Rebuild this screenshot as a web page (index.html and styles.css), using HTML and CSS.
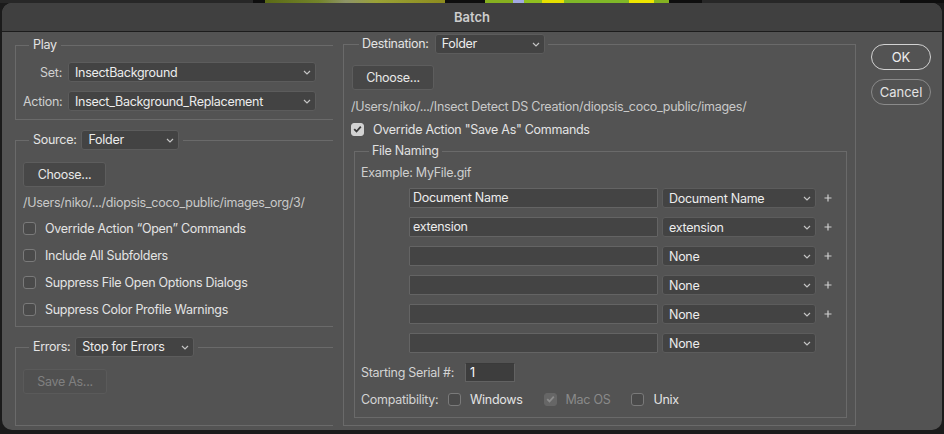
FILE: index.html
```html
<!DOCTYPE html>
<html>
<head>
<meta charset="utf-8">
<title>Batch</title>
<link rel="stylesheet" href="styles.css">
</head>
<body>
<div class="strip">
  <span class="seg s1"></span><span class="seg s2"></span><span class="seg s3"></span><span class="seg s4"></span><span class="seg s5"></span><span class="seg s6"></span><span class="seg s7"></span><span class="seg s8"></span>
</div>
<div class="dialog">
  <div class="titlebar">Batch</div>
  <div class="content">
    <div class="leftcol">
      <fieldset class="grp play">
        <legend>Play</legend>
        <div class="frow"><span class="flabel">Set:</span><div class="sel wsel"><span class="t">InsectBackground</span><svg class="chev" width="8" height="5" viewBox="0 0 8 5"><path d="M1 1l3 3 3-3" fill="none" stroke="#c4c4c4" stroke-width="1.2"/></svg></div></div>
        <div class="frow"><span class="flabel">Action:</span><div class="sel wsel"><span class="t">Insect_Background_Replacement</span><svg class="chev" width="8" height="5" viewBox="0 0 8 5"><path d="M1 1l3 3 3-3" fill="none" stroke="#c4c4c4" stroke-width="1.2"/></svg></div></div>
      </fieldset>

      <fieldset class="grp source">
        <legend><span class="lt">Source:</span><div class="sel srcsel"><span class="t">Folder</span><svg class="chev" width="8" height="5" viewBox="0 0 8 5"><path d="M1 1l3 3 3-3" fill="none" stroke="#c4c4c4" stroke-width="1.2"/></svg></div></legend>
        <button class="btn choose">Choose...</button>
        <div class="path path1">/Users/niko/.../diopsis_coco_public/images_org/3/</div>
        <div class="cbrow"><span class="cb"></span><span>Override Action “Open” Commands</span></div>
        <div class="cbrow"><span class="cb"></span><span>Include All Subfolders</span></div>
        <div class="cbrow"><span class="cb"></span><span>Suppress File Open Options Dialogs</span></div>
        <div class="cbrow"><span class="cb"></span><span>Suppress Color Profile Warnings</span></div>
      </fieldset>

      <fieldset class="grp errors">
        <legend><span class="lt">Errors:</span><div class="sel errsel"><span class="t">Stop for Errors</span><svg class="chev" width="8" height="5" viewBox="0 0 8 5"><path d="M1 1l3 3 3-3" fill="none" stroke="#c4c4c4" stroke-width="1.2"/></svg></div></legend>
        <button class="btn saveas" disabled>Save As...</button>
      </fieldset>
    </div>

    <div class="rightcol">
      <fieldset class="box dest">
        <legend><span class="lt">Destination:</span><div class="sel destsel"><span class="t">Folder</span><svg class="chev" width="8" height="5" viewBox="0 0 8 5"><path d="M1 1l3 3 3-3" fill="none" stroke="#c4c4c4" stroke-width="1.2"/></svg></div></legend>
        <button class="btn choose2">Choose...</button>
        <div class="path path2">/Users/niko/.../Insect Detect DS Creation/diopsis_coco_public/images/</div>
        <div class="cbrow cbrow2"><span class="cb on"><svg width="9" height="8" viewBox="0 0 9 8"><path d="M1.2 4.2l2.3 2.3L7.8 1.6" fill="none" stroke="#3a3a3a" stroke-width="1.8"/></svg></span><span>Override Action "Save As" Commands</span></div>

        <fieldset class="box naming">
          <legend>File Naming</legend>
          <div class="example">Example: MyFile.gif</div>
          <div class="rows">
            <div class="nrow"><div class="inp">Document Name</div><div class="sel nsel"><span class="t">Document Name</span><svg class="chev" width="8" height="5" viewBox="0 0 8 5"><path d="M1 1l3 3 3-3" fill="none" stroke="#c4c4c4" stroke-width="1.2"/></svg></div><svg class="plus" width="8" height="8" viewBox="0 0 8 8"><path d="M4 .5v7M.5 4h7" stroke="#cfcfcf" stroke-width="1.2"/></svg></div>
            <div class="nrow"><div class="inp">extension</div><div class="sel nsel"><span class="t">extension</span><svg class="chev" width="8" height="5" viewBox="0 0 8 5"><path d="M1 1l3 3 3-3" fill="none" stroke="#c4c4c4" stroke-width="1.2"/></svg></div><svg class="plus" width="8" height="8" viewBox="0 0 8 8"><path d="M4 .5v7M.5 4h7" stroke="#cfcfcf" stroke-width="1.2"/></svg></div>
            <div class="nrow"><div class="inp"></div><div class="sel nsel"><span class="t">None</span><svg class="chev" width="8" height="5" viewBox="0 0 8 5"><path d="M1 1l3 3 3-3" fill="none" stroke="#c4c4c4" stroke-width="1.2"/></svg></div><svg class="plus" width="8" height="8" viewBox="0 0 8 8"><path d="M4 .5v7M.5 4h7" stroke="#cfcfcf" stroke-width="1.2"/></svg></div>
            <div class="nrow"><div class="inp"></div><div class="sel nsel"><span class="t">None</span><svg class="chev" width="8" height="5" viewBox="0 0 8 5"><path d="M1 1l3 3 3-3" fill="none" stroke="#c4c4c4" stroke-width="1.2"/></svg></div><svg class="plus" width="8" height="8" viewBox="0 0 8 8"><path d="M4 .5v7M.5 4h7" stroke="#cfcfcf" stroke-width="1.2"/></svg></div>
            <div class="nrow"><div class="inp"></div><div class="sel nsel"><span class="t">None</span><svg class="chev" width="8" height="5" viewBox="0 0 8 5"><path d="M1 1l3 3 3-3" fill="none" stroke="#c4c4c4" stroke-width="1.2"/></svg></div><svg class="plus" width="8" height="8" viewBox="0 0 8 8"><path d="M4 .5v7M.5 4h7" stroke="#cfcfcf" stroke-width="1.2"/></svg></div>
            <div class="nrow"><div class="inp"></div><div class="sel nsel"><span class="t">None</span><svg class="chev" width="8" height="5" viewBox="0 0 8 5"><path d="M1 1l3 3 3-3" fill="none" stroke="#c4c4c4" stroke-width="1.2"/></svg></div></div>
          </div>
          <div class="serial"><span class="slabel">Starting Serial #:</span><div class="sinp">1</div></div>
          <div class="compat">
            <span class="clabel">Compatibility:</span>
            <span class="cb"></span><span class="copt">Windows</span>
            <span class="cb dis"><svg width="9" height="8" viewBox="0 0 9 8"><path d="M1.2 4.2l2.3 2.3L7.8 1.6" fill="none" stroke="#8c8c8c" stroke-width="1.8"/></svg></span><span class="copt dim">Mac OS</span>
            <span class="cb"></span><span class="copt">Unix</span>
          </div>
        </fieldset>
      </fieldset>
    </div>

    <div class="btncol">
      <button class="pill ok">OK</button>
      <button class="pill cancel">Cancel</button>
    </div>
  </div>
</div>
</body>
</html>
```
FILE: styles.css
```css
* { box-sizing: border-box; }
html, body { margin: 0; padding: 0; }
body {
  background: #1b1b1b;
  font-family: Inter, "Noto Sans", sans-serif;
  font-size: 12.5px;
  letter-spacing: -0.28px;
  color: #e4e4e4;
  overflow: hidden;
  height: 434px;
}
.strip { display: flex; height: 3px; }
.seg { display: block; height: 3px; }
.s1 { width: 253px; background: #272727; }
.s2 { width: 12px; background: #0e0e0e; }
.s3 { width: 180px; background: linear-gradient(90deg, #5b6a16, #73842a 30%, #8e9468 45%, #9aa236 62%, #8d8c1e 100%); }
.s4 { width: 40px; background: #0e0e0e; }
.s5 { width: 184px; background: linear-gradient(90deg, #86b020 0 15%, #a2aae2 15% 21%, #90c020 21% 31%, #e6e000 31% 43%, #80b828 43% 78%, #eee600 78% 92%, #84b222 92%); }
.s6 { width: 33px; background: #0e0e0e; }
.s7 { width: 198px; background: #272727; }
.s8 { width: 44px; background: #0e0e0e; }

.dialog {
  margin: 0 2px;
  height: 427px;
  background: #535353;
  border-radius: 10px;
  overflow: hidden;
  display: flex;
  flex-direction: column;
}
.titlebar {
  height: 29px;
  line-height: 28px;
  background: #404040;
  border-bottom: 1px solid #1c1c1c;
  text-align: center;
  font-weight: 600;
  font-size: 13px;
  letter-spacing: 0;
  color: #cdcdcd;
  flex: none;
}
.content {
  flex: 1;
  display: flex;
  padding: 0 11px 4px 13px;
  min-height: 0;
}
.leftcol { width: 318px; display: flex; flex-direction: column; flex: none; }
.rightcol { width: 513px; margin-left: 10px; display: flex; flex-direction: column; flex: none; }
.btncol { width: 60px; margin-left: 15px; padding-top: 12px; display: flex; flex-direction: column; gap: 9px; flex: none; }

fieldset { margin: 0; padding: 0; min-width: 0; border: 1px solid #6a6a6a; }
legend {
  display: flex;
  align-items: center;
  line-height: 16px;
  color: #e4e4e4;
  white-space: nowrap;
}
.lt { color: #e4e4e4; }

/* left groups */
.grp { border-right: none; padding-left: 7px; }
.grp > legend { margin-left: 6px; padding: 0 4px; gap: 5px; }
.play { margin-top: 5px; padding-top: 9px; padding-bottom: 8px; }
.frow { display: flex; align-items: center; height: 20px; }
.frow + .frow { margin-top: 9px; }
.flabel { width: 39px; text-align: right; margin-right: 6px; color: #cfcfcf; }

.sel {
  display: flex;
  align-items: center;
  height: 20px;
  background: #434343;
  border: 1px solid #5c5c5c;
  border-radius: 3px;
  padding: 0 4px 0 6px;
  color: #ececec;
}
.sel .t { flex: 1; white-space: nowrap; overflow: hidden; }
.chev { flex: none; }
.wsel { width: 248px; }
.srcsel { width: 98px; }
.errsel { width: 119px; }
.destsel { width: 110px; }

.btn {
  display: block;
  height: 25px;
  background: #474747;
  border: 1px solid #5d5d5d;
  border-radius: 3px;
  color: #e8e8e8;
  font: inherit;
  letter-spacing: inherit;
  padding: 0;
}
.source { margin-top: 10px; padding-top: 12px; padding-bottom: 3px; }
.choose { width: 83px; }
.path { margin-top: 8px; line-height: 16px; color: #c9c9c9; white-space: nowrap; }
.path1 { margin-bottom: 4px; }
.cbrow { display: flex; align-items: center; height: 27px; gap: 9px; }
.cb {
  width: 13px;
  height: 13px;
  flex: none;
  border: 1px solid #7a7a7a;
  border-radius: 3px;
  background: #4a4a4a;
  display: flex;
  align-items: center;
  justify-content: center;
}
.cb.on { background: #d2d2d2; border-color: #d2d2d2; }
.cb.dis { background: #666; border-color: #666; }

.errors { margin-top: 10px; flex: 1; padding-top: 12px; }
.saveas { width: 84px; background: #505050; border-color: #5a5a5a; color: #808080; }

/* right */
.box > legend { padding: 0 3px; }
.dest { margin-top: 2px; flex: 1; padding: 11px 0 0 8px; }
.dest > legend { margin-left: 7px; gap: 6px; }
.choose2 { width: 82px; }
.path2 { margin-top: 9px; margin-left: -1px; }
.cbrow2 { margin-top: 5px; height: 18px; margin-left: -1px; gap: 9px; }

.naming { margin: 5px 8px 0 2px; padding: 6px 0 8px 6px; }
.naming > legend { margin-left: 8px; color: #e0e0e0; }
.example { line-height: 16px; color: #cfcfcf; }
.rows { margin-top: 7px; padding-left: 48px; display: flex; flex-direction: column; gap: 9px; }
.nrow { display: flex; align-items: center; height: 20px; }
.inp {
  width: 249px;
  height: 20px;
  background: #444;
  border: 1px solid #646464;
  border-radius: 1px;
  padding-left: 3px;
  line-height: 18px;
  color: #ececec;
  white-space: nowrap;
}
.nsel { width: 154px; margin-left: 4px; }
.plus { margin-left: 8px; }
.serial { display: flex; align-items: center; height: 20px; margin-top: 9px; }
.slabel { color: #d4d4d4; width: 104px; }
.sinp {
  width: 50px;
  height: 19px;
  background: #3d3d3d;
  border: 1px solid #626262;
  border-top-color: #3a3a3a;
  padding-left: 4px;
  line-height: 17px;
  color: #fff;
}
.compat { display: flex; align-items: center; height: 20px; margin-top: 7px; }
.clabel { color: #d4d4d4; width: 87px; }
.copt { margin-left: 9px; margin-right: 21px; }
.copt.dim { color: #8a8a8a; }

.pill {
  height: 26px;
  border-radius: 13px;
  background: transparent;
  font: inherit;
  font-size: 13px;
  letter-spacing: 0;
  padding: 0;
  color: #eeeeee;
}
.ok { border: 1px solid #d2d2d2; }
.cancel { border: 1px solid #8a8a8a; color: #e4e4e4; }
```
